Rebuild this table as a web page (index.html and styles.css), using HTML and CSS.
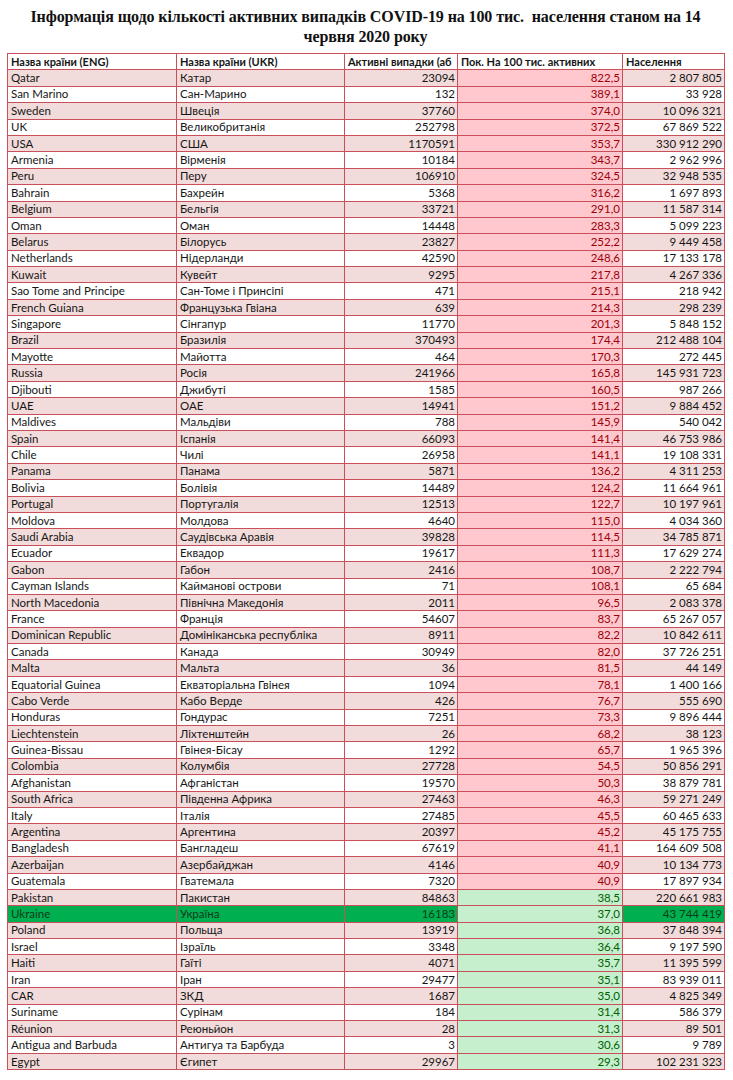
FILE: index.html
```html
<!DOCTYPE html>
<html lang="uk">
<head>
<meta charset="utf-8">
<title>COVID-19</title>
<link rel="stylesheet" href="styles.css">
</head>
<body>
<h1 class="title">Інформація щодо кількості активних випадків COVID-19 на 100 тис.&nbsp; населення станом на 14<br>червня 2020 року</h1>
<table class="grid">
<colgroup><col class="c1"><col class="c2"><col class="c3"><col class="c4"><col class="c5"></colgroup>
<thead>
<tr><th>Назва країни (ENG)</th><th>Назва країни (UKR)</th><th>Активні випадки (аб</th><th>Пок. На 100 тис. активних</th><th>Населення</th></tr>
</thead>
<tbody>
<tr class="alt"><td>Qatar</td><td>Катар</td><td class="n">23094</td><td class="n hi">822,5</td><td class="n">2 807 805</td></tr>
<tr><td>San Marino</td><td>Сан-Марино</td><td class="n">132</td><td class="n hi">389,1</td><td class="n">33 928</td></tr>
<tr class="alt"><td>Sweden</td><td>Швеція</td><td class="n">37760</td><td class="n hi">374,0</td><td class="n">10 096 321</td></tr>
<tr><td>UK</td><td>Великобританія</td><td class="n">252798</td><td class="n hi">372,5</td><td class="n">67 869 522</td></tr>
<tr class="alt"><td>USA</td><td>США</td><td class="n">1170591</td><td class="n hi">353,7</td><td class="n">330 912 290</td></tr>
<tr><td>Armenia</td><td>Вірменія</td><td class="n">10184</td><td class="n hi">343,7</td><td class="n">2 962 996</td></tr>
<tr class="alt"><td>Peru</td><td>Перу</td><td class="n">106910</td><td class="n hi">324,5</td><td class="n">32 948 535</td></tr>
<tr><td>Bahrain</td><td>Бахрейн</td><td class="n">5368</td><td class="n hi">316,2</td><td class="n">1 697 893</td></tr>
<tr class="alt"><td>Belgium</td><td>Бельгія</td><td class="n">33721</td><td class="n hi">291,0</td><td class="n">11 587 314</td></tr>
<tr><td>Oman</td><td>Оман</td><td class="n">14448</td><td class="n hi">283,3</td><td class="n">5 099 223</td></tr>
<tr class="alt"><td>Belarus</td><td>Білорусь</td><td class="n">23827</td><td class="n hi">252,2</td><td class="n">9 449 458</td></tr>
<tr><td>Netherlands</td><td>Нідерланди</td><td class="n">42590</td><td class="n hi">248,6</td><td class="n">17 133 178</td></tr>
<tr class="alt"><td>Kuwait</td><td>Кувейт</td><td class="n">9295</td><td class="n hi">217,8</td><td class="n">4 267 336</td></tr>
<tr><td>Sao Tome and Principe</td><td>Сан-Томе і Принсіпі</td><td class="n">471</td><td class="n hi">215,1</td><td class="n">218 942</td></tr>
<tr class="alt"><td>French Guiana</td><td>Французька Гвіана</td><td class="n">639</td><td class="n hi">214,3</td><td class="n">298 239</td></tr>
<tr><td>Singapore</td><td>Сінгапур</td><td class="n">11770</td><td class="n hi">201,3</td><td class="n">5 848 152</td></tr>
<tr class="alt"><td>Brazil</td><td>Бразилія</td><td class="n">370493</td><td class="n hi">174,4</td><td class="n">212 488 104</td></tr>
<tr><td>Mayotte</td><td>Майотта</td><td class="n">464</td><td class="n hi">170,3</td><td class="n">272 445</td></tr>
<tr class="alt"><td>Russia</td><td>Росія</td><td class="n">241966</td><td class="n hi">165,8</td><td class="n">145 931 723</td></tr>
<tr><td>Djibouti</td><td>Джибуті</td><td class="n">1585</td><td class="n hi">160,5</td><td class="n">987 266</td></tr>
<tr class="alt"><td>UAE</td><td>ОАЕ</td><td class="n">14941</td><td class="n hi">151,2</td><td class="n">9 884 452</td></tr>
<tr><td>Maldives</td><td>Мальдіви</td><td class="n">788</td><td class="n hi">145,9</td><td class="n">540 042</td></tr>
<tr class="alt"><td>Spain</td><td>Іспанія</td><td class="n">66093</td><td class="n hi">141,4</td><td class="n">46 753 986</td></tr>
<tr><td>Chile</td><td>Чилі</td><td class="n">26958</td><td class="n hi">141,1</td><td class="n">19 108 331</td></tr>
<tr class="alt"><td>Panama</td><td>Панама</td><td class="n">5871</td><td class="n hi">136,2</td><td class="n">4 311 253</td></tr>
<tr><td>Bolivia</td><td>Болівія</td><td class="n">14489</td><td class="n hi">124,2</td><td class="n">11 664 961</td></tr>
<tr class="alt"><td>Portugal</td><td>Португалія</td><td class="n">12513</td><td class="n hi">122,7</td><td class="n">10 197 961</td></tr>
<tr><td>Moldova</td><td>Молдова</td><td class="n">4640</td><td class="n hi">115,0</td><td class="n">4 034 360</td></tr>
<tr class="alt"><td>Saudi Arabia</td><td>Саудівська Аравія</td><td class="n">39828</td><td class="n hi">114,5</td><td class="n">34 785 871</td></tr>
<tr><td>Ecuador</td><td>Еквадор</td><td class="n">19617</td><td class="n hi">111,3</td><td class="n">17 629 274</td></tr>
<tr class="alt"><td>Gabon</td><td>Габон</td><td class="n">2416</td><td class="n hi">108,7</td><td class="n">2 222 794</td></tr>
<tr><td>Cayman Islands</td><td>Кайманові острови</td><td class="n">71</td><td class="n hi">108,1</td><td class="n">65 684</td></tr>
<tr class="alt"><td>North Macedonia</td><td>Північна Македонія</td><td class="n">2011</td><td class="n hi">96,5</td><td class="n">2 083 378</td></tr>
<tr><td>France</td><td>Франція</td><td class="n">54607</td><td class="n hi">83,7</td><td class="n">65 267 057</td></tr>
<tr class="alt"><td>Dominican Republic</td><td>Домініканська республіка</td><td class="n">8911</td><td class="n hi">82,2</td><td class="n">10 842 611</td></tr>
<tr><td>Canada</td><td>Канада</td><td class="n">30949</td><td class="n hi">82,0</td><td class="n">37 726 251</td></tr>
<tr class="alt"><td>Malta</td><td>Мальта</td><td class="n">36</td><td class="n hi">81,5</td><td class="n">44 149</td></tr>
<tr><td>Equatorial Guinea</td><td>Екваторіальна Гвінея</td><td class="n">1094</td><td class="n hi">78,1</td><td class="n">1 400 166</td></tr>
<tr class="alt"><td>Cabo Verde</td><td>Кабо Верде</td><td class="n">426</td><td class="n hi">76,7</td><td class="n">555 690</td></tr>
<tr><td>Honduras</td><td>Гондурас</td><td class="n">7251</td><td class="n hi">73,3</td><td class="n">9 896 444</td></tr>
<tr class="alt"><td>Liechtenstein</td><td>Ліхтенштейн</td><td class="n">26</td><td class="n hi">68,2</td><td class="n">38 123</td></tr>
<tr><td>Guinea-Bissau</td><td>Гвінея-Бісау</td><td class="n">1292</td><td class="n hi">65,7</td><td class="n">1 965 396</td></tr>
<tr class="alt"><td>Colombia</td><td>Колумбія</td><td class="n">27728</td><td class="n hi">54,5</td><td class="n">50 856 291</td></tr>
<tr><td>Afghanistan</td><td>Афганістан</td><td class="n">19570</td><td class="n hi">50,3</td><td class="n">38 879 781</td></tr>
<tr class="alt"><td>South Africa</td><td>Південна Африка</td><td class="n">27463</td><td class="n hi">46,3</td><td class="n">59 271 249</td></tr>
<tr><td>Italy</td><td>Італія</td><td class="n">27485</td><td class="n hi">45,5</td><td class="n">60 465 633</td></tr>
<tr class="alt"><td>Argentina</td><td>Аргентина</td><td class="n">20397</td><td class="n hi">45,2</td><td class="n">45 175 755</td></tr>
<tr><td>Bangladesh</td><td>Бангладеш</td><td class="n">67619</td><td class="n hi">41,1</td><td class="n">164 609 508</td></tr>
<tr class="alt"><td>Azerbaijan</td><td>Азербайджан</td><td class="n">4146</td><td class="n hi">40,9</td><td class="n">10 134 773</td></tr>
<tr><td>Guatemala</td><td>Гватемала</td><td class="n">7320</td><td class="n hi">40,9</td><td class="n">17 897 934</td></tr>
<tr class="alt"><td>Pakistan</td><td>Пакистан</td><td class="n">84863</td><td class="n lo">38,5</td><td class="n">220 661 983</td></tr>
<tr class="ua"><td>Ukraine</td><td>Україна</td><td class="n">16183</td><td class="n lo">37,0</td><td class="n">43 744 419</td></tr>
<tr class="alt"><td>Poland</td><td>Польща</td><td class="n">13919</td><td class="n lo">36,8</td><td class="n">37 848 394</td></tr>
<tr><td>Israel</td><td>Ізраїль</td><td class="n">3348</td><td class="n lo">36,4</td><td class="n">9 197 590</td></tr>
<tr class="alt"><td>Haiti</td><td>Гаїті</td><td class="n">4071</td><td class="n lo">35,7</td><td class="n">11 395 599</td></tr>
<tr><td>Iran</td><td>Іран</td><td class="n">29477</td><td class="n lo">35,1</td><td class="n">83 939 011</td></tr>
<tr class="alt"><td>CAR</td><td>ЗКД</td><td class="n">1687</td><td class="n lo">35,0</td><td class="n">4 825 349</td></tr>
<tr><td>Suriname</td><td>Сурінам</td><td class="n">184</td><td class="n lo">31,4</td><td class="n">586 379</td></tr>
<tr class="alt"><td>Réunion</td><td>Реюньйон</td><td class="n">28</td><td class="n lo">31,3</td><td class="n">89 501</td></tr>
<tr><td>Antigua and Barbuda</td><td>Антигуа та Барбуда</td><td class="n">3</td><td class="n lo">30,6</td><td class="n">9 789</td></tr>
<tr class="alt"><td>Egypt</td><td>Єгипет</td><td class="n">29967</td><td class="n lo">29,3</td><td class="n">102 231 323</td></tr>
</tbody>
</table>
</body>
</html>
```

FILE: styles.css
```css
html, body {
  margin: 0;
  padding: 0;
  background: #ffffff;
}

body {
  padding: 7px 9px 0 7px;
}

.title {
  margin: 0 0 6px 0;
  font-family: "Liberation Serif", "Times New Roman", serif;
  font-weight: bold;
  font-size: 16px;
  line-height: 20px;
  letter-spacing: -0.1px;
  text-align: center;
  color: #111111;
  white-space: nowrap;
}

.grid {
  width: 717px;
  border-collapse: collapse;
  table-layout: fixed;
  font-family: Lato, "Liberation Sans", sans-serif;
  font-size: 11.5px;
  color: #161616;
}

.c1 { width: 169px; }
.c2 { width: 168px; }
.c3 { width: 113px; }
.c4 { width: 165px; }
.c5 { width: 102px; }

.grid tr {
  height: 16.4px;
}

.grid th,
.grid td {
  border: 1px solid #c9505a;
  padding: 0 2px 0 3px;
  white-space: nowrap;
  overflow: hidden;
  text-align: left;
  line-height: 14px;
}

.grid th {
  font-weight: bold;
  font-size: 11px;
  background: #ffffff;
}

.grid td.n {
  text-align: right;
}

.grid tr.alt td {
  background: #f2dcdb;
}

.grid td.hi,
.grid tr.alt td.hi {
  background: #ffc7ce;
  color: #9c0006;
}

.grid td.lo,
.grid tr.alt td.lo {
  background: #c6efce;
  color: #006100;
}

.grid tr.ua td {
  background: #00b050;
  color: #0f3a1a;
}

.grid tr.ua td.lo {
  background: #c6efce;
  color: #006100;
}
```
